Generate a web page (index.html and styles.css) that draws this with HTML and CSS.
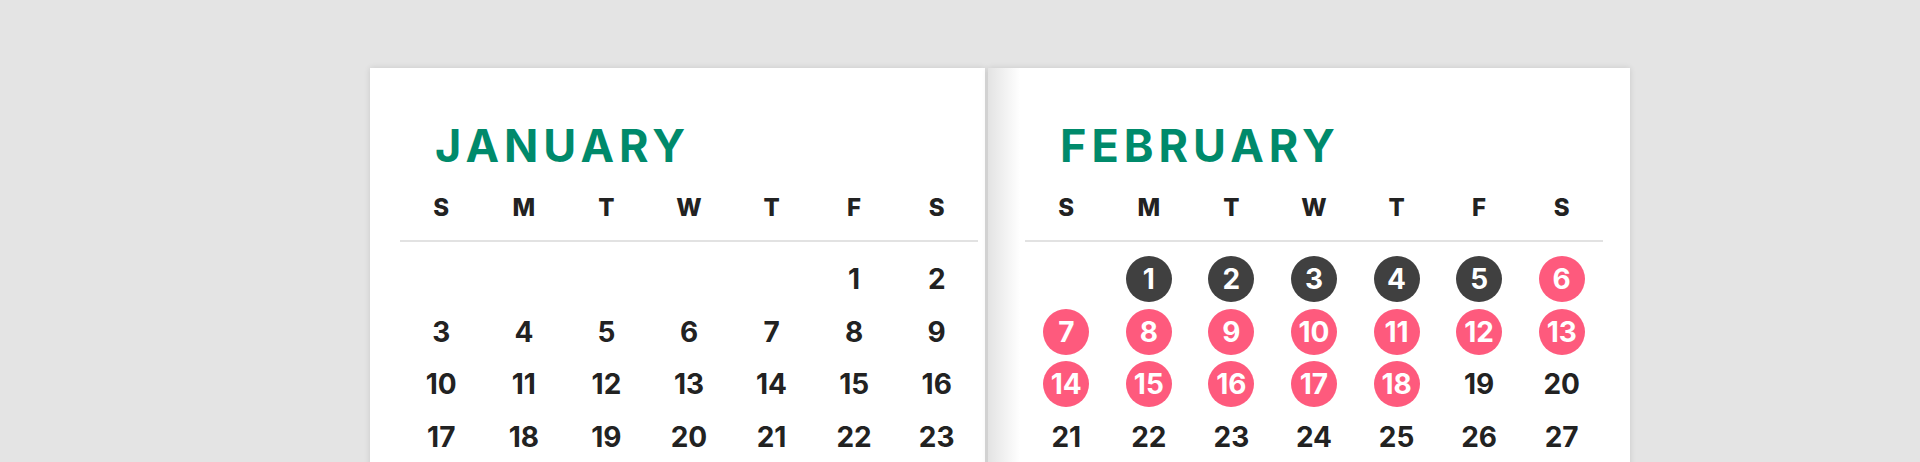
FILE: index.html
```html
<!DOCTYPE html>
<html lang="en">
<head>
  <meta charset="UTF-8">
  <title>Calendar</title>
  <link rel="stylesheet" href="styles.css">
</head>
<body>

<div class="spread">
  <section class="page page-left">
    <h2 class="month">January</h2>
    <div class="weekdays">
      <span>S</span><span>M</span><span>T</span><span>W</span><span>T</span><span>F</span><span>S</span>
    </div>
    <div class="days">
      <span></span><span></span><span></span><span></span><span></span><span>1</span><span>2</span>
      <span>3</span><span>4</span><span>5</span><span>6</span><span>7</span><span>8</span><span>9</span>
      <span>10</span><span>11</span><span>12</span><span>13</span><span>14</span><span>15</span><span>16</span>
      <span>17</span><span>18</span><span>19</span><span>20</span><span>21</span><span>22</span><span>23</span>
    </div>
  </section>

  <section class="page page-right">
    <h2 class="month">February</h2>
    <div class="weekdays">
      <span>S</span><span>M</span><span>T</span><span>W</span><span>T</span><span>F</span><span>S</span>
    </div>
    <div class="days">
      <span></span><span class="dot past">1</span><span class="dot past">2</span><span class="dot past">3</span><span class="dot past">4</span><span class="dot past">5</span><span class="dot booked">6</span>
      <span class="dot booked">7</span><span class="dot booked">8</span><span class="dot booked">9</span><span class="dot booked">10</span><span class="dot booked">11</span><span class="dot booked">12</span><span class="dot booked">13</span>
      <span class="dot booked">14</span><span class="dot booked">15</span><span class="dot booked">16</span><span class="dot booked">17</span><span class="dot booked">18</span><span>19</span><span>20</span>
      <span>21</span><span>22</span><span>23</span><span>24</span><span>25</span><span>26</span><span>27</span>
    </div>
  </section>
</div>

</body>
</html>
```

FILE: styles.css
```css
html, body {
  margin: 0;
  height: 462px;
  overflow: hidden;
}
body {
  background-color: #e4e4e4;
  font-family: Inter, 'Liberation Sans', sans-serif;
  color: #222;
}
.spread {
  display: flex;
  gap: 3px;
  padding: 68px 0 0 370px;
}
.page {
  background: #fff;
  box-shadow: 0 0 6px rgba(0, 0, 0, 0.12);
  padding-top: 54px;
  height: 500px;
}
.page-left {
  width: 578px;
  padding-left: 30px;
  padding-right: 7px;
}
.page-right {
  width: 578px;
  padding-left: 37px;
  padding-right: 27px;
  background: linear-gradient(to right, #e3e3e3 0, #fff 32px);
}
.month {
  margin: 0 0 0 35px;
  font-size: 45px;
  line-height: 48px;
  font-weight: 700;
  letter-spacing: 5px;
  text-transform: uppercase;
  color: #008a6b;
}
.weekdays {
  display: grid;
  grid-template-columns: repeat(7, 1fr);
  margin-top: 22px;
  padding-bottom: 16px;
  border-bottom: 2px solid #e2e2e2;
  font-size: 24px;
  line-height: 32px;
  font-weight: 800;
  text-align: center;
}
.days {
  display: grid;
  grid-template-columns: repeat(7, 1fr);
  grid-auto-rows: 52.5px;
  margin-top: 11px;
  font-size: 28px;
  font-weight: 700;
}
.days span {
  display: flex;
  align-items: center;
  justify-content: center;
  width: 46px;
  height: 46px;
  place-self: center;
  border-radius: 50%;
}
.dot {
  color: #fff;
}
.past {
  background-color: #404040;
}
.booked {
  background-color: #fe5a7d;
}
```
